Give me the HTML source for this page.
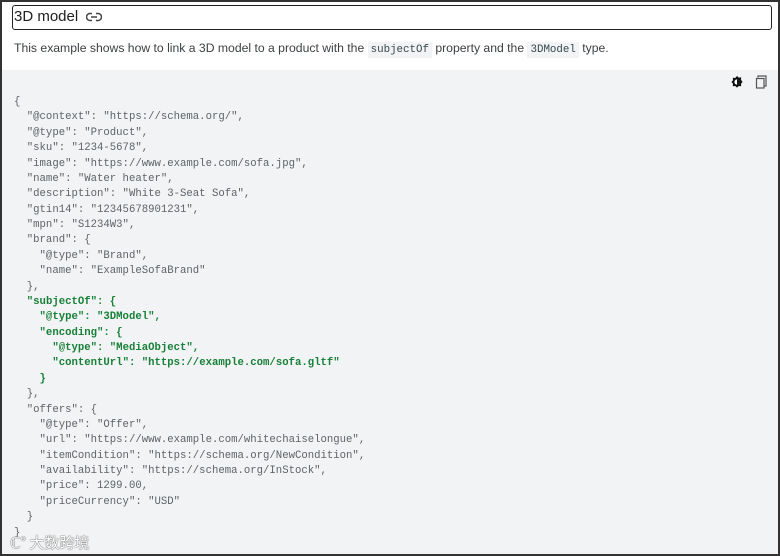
<!DOCTYPE html>
<html><head><meta charset="utf-8"><style>
html,body{margin:0;padding:0;width:780px;height:556px;overflow:hidden;background:#fff;}
.frame{position:absolute;left:0;top:0;width:776px;height:552px;border:2px solid #333;background:#fff;}
.title{position:absolute;left:10px;top:3px;width:760px;border:1.5px solid #222;border-radius:3px;font:15px "Liberation Sans",sans-serif;color:#202124;line-height:22px;padding-left:1px;box-sizing:border-box;height:25px;}
.desc{position:absolute;left:12px;top:39px;font:12.2px "Liberation Sans",sans-serif;color:#3c4043;}
.desc code{font:10.8px "Liberation Mono",monospace;background:#f1f3f4;padding:2px 3px;color:#37474f;}
.code{position:absolute;left:0;top:68px;width:776px;height:484px;background:#f1f3f4;}
pre{position:absolute;left:12px;top:25px;margin:0;font:10.65px/15.37px "Liberation Mono",monospace;color:#5f6368;}
b{color:#188038;}
</style></head><body>
<div class="frame">
<div class="title">3D model <svg width="16" height="10" viewBox="0 0 16 10" style="vertical-align:middle;margin-left:4px"><path d="M6 1.5H4a3.5 3.5 0 0 0 0 7h2M10 1.5h2a3.5 3.5 0 0 1 0 7h-2M5 5h6" fill="none" stroke="#444" stroke-width="1.5"/></svg></div>
<div class="desc">This example shows how to link a 3D model to a product with the <code>subjectOf</code> property and the <code>3DModel</code> type.</div>
<div class="code">
<svg style="position:absolute;left:728px;top:5px" width="14" height="14" viewBox="0 0 14 14"><path d="M7 1l1.8 1.6 2.4-.2-.2 2.4L12.6 7 11 8.8l.2 2.4-2.4-.2L7 12.6 5.2 11l-2.4.2.2-2.4L1.4 7 3 5.2 2.8 2.8l2.4.2z" fill="#111"/><circle cx="7" cy="7" r="2.6" fill="#fff"/><path d="M7 4.4a2.6 2.6 0 0 1 0 5.2z" fill="#111"/></svg>
<svg style="position:absolute;left:753px;top:5px" width="13" height="14" viewBox="0 0 13 14"><path d="M3 2.5V1h8v10H9.5" fill="none" stroke="#555" stroke-width="1.2"/><rect x="1.5" y="3.5" width="7.5" height="9.5" fill="none" stroke="#555" stroke-width="1.2"/></svg>
<pre>{
  "@context": "https://schema.org/",
  "@type": "Product",
  "sku": "1234-5678",
  "image": "https://www.example.com/sofa.jpg",
  "name": "Water heater",
  "description": "White 3-Seat Sofa",
  "gtin14": "12345678901231",
  "mpn": "S1234W3",
  "brand": {
    "@type": "Brand",
    "name": "ExampleSofaBrand"
  },
  <b>"subjectOf": {</b>
    <b>"@type": "3DModel",</b>
    <b>"encoding": {</b>
      <b>"@type": "MediaObject",</b>
      <b>"contentUrl": "https://example.com/sofa.gltf"</b>
    <b>}</b>
  },
  "offers": {
    "@type": "Offer",
    "url": "https://www.example.com/whitechaiselongue",
    "itemCondition": "https://schema.org/NewCondition",
    "availability": "https://schema.org/InStock",
    "price": 1299.00,
    "priceCurrency": "USD"
  }
}</pre>
<div style="position:absolute;left:8px;top:462px;font:15px 'Noto Sans CJK SC',sans-serif;color:#fff;text-shadow:0 0 1px #555,0 0 1px #555;">ℂ° 大数跨境</div>
</div>
</div>
</body></html>
